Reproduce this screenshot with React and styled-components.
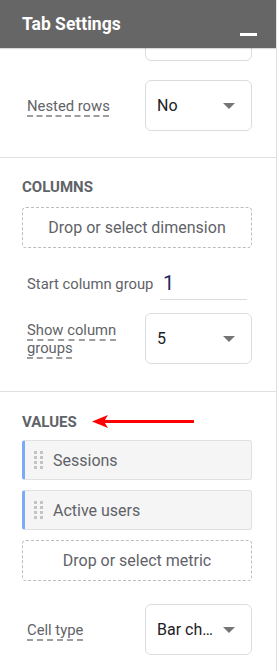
import React from "react";
import styled, { createGlobalStyle } from "styled-components";

const Global = createGlobalStyle`
  html, body { margin: 0; padding: 0; background: #fff; }
  body { font-family: Roboto, "Noto Sans", Arial, sans-serif; }
  * { box-sizing: border-box; }
`;

const Panel = styled.div`
  position: relative;
  width: 277px;
  height: 671px;
  border-right: 1px solid #e0e0e0;
  display: flex;
  flex-direction: column;
  overflow: hidden;
`;

const Header = styled.div`
  height: 48px;
  flex: none;
  background: #666666;
  display: flex;
  align-items: center;
  justify-content: space-between;
  padding: 0 19px 0 22px;
  box-shadow: 0 1px 1px rgba(0, 0, 0, 0.15);
  position: relative;
  z-index: 2;
`;

const Title = styled.div`
  color: #fff;
  font-size: 17.5px;
  font-weight: 700;
  margin-top: -1px;
`;

const Minimize = styled.div`
  width: 17px;
  height: 3px;
  background: #fff;
  margin-top: 20px;
`;

const Body = styled.div`
  flex: 1;
  overflow: hidden;
`;

const Section = styled.div`
  padding: ${(p) => p.$pad || "0 24px 0 22px"};
  border-bottom: ${(p) => (p.$divider ? "1px solid #e0e0e0" : "none")};
  display: flex;
  flex-direction: column;
`;

const Heading = styled.div`
  font-size: 15px;
  font-weight: 700;
  color: #5f6368;
  line-height: 16px;
  margin-bottom: ${(p) => p.$mb || "12px"};
`;

const Row = styled.div`
  display: flex;
  align-items: center;
  justify-content: space-between;
  padding-left: 5px;
  margin-top: ${(p) => p.$mt || "0"};
`;

const Label = styled.span`
  font-size: 14.8px;
  line-height: 18px;
  color: #5f6368;
  max-width: ${(p) => p.$max || "112px"};
  white-space: ${(p) => (p.$nowrap ? "nowrap" : "normal")};
  ${(p) =>
    p.$dashed &&
    `
    text-decoration: underline dashed #9e9e9e;
    text-decoration-thickness: 2px;
    text-underline-offset: 5px;
  `}
`;

const SelectBox = styled.div`
  width: 107px;
  height: 51px;
  border: 1px solid #dadce0;
  border-radius: 6px;
  display: flex;
  align-items: center;
  padding: 0 16px 0 11px;
  gap: 6px;
  background: #fff;
`;

const SelectValue = styled.span`
  flex: 1;
  font-size: 16px;
  color: #202124;
  white-space: nowrap;
  overflow: hidden;
  text-overflow: ellipsis;
`;

const Caret = styled.span`
  flex: none;
  width: 0;
  height: 0;
  border-left: 6px solid transparent;
  border-right: 6px solid transparent;
  border-top: 6px solid #757575;
`;

const DropZone = styled.div`
  height: 41px;
  border: 1px dashed #bdbdbd;
  border-radius: 4px;
  display: flex;
  align-items: center;
  justify-content: center;
  font-size: 16px;
  color: #5f6368;
`;

const InputWrap = styled.div`
  width: 87px;
  margin-right: 5px;
  border-bottom: 1px solid #dadce0;
  height: 33px;
  display: flex;
  align-items: center;
  padding-left: 3px;
  font-size: 20px;
  color: #1f2a5e;
`;

const Chip = styled.div`
  height: 40px;
  background: #f5f5f5;
  border: 1px solid #e0e0e0;
  border-left: 3px solid #7baaf7;
  border-radius: 3px;
  display: flex;
  align-items: center;
  padding-left: 9px;
  gap: 10px;
  font-size: 16px;
  color: #5f6368;
  margin-bottom: ${(p) => p.$mb || "0"};
`;

const Handle = styled.span`
  display: grid;
  grid-template-columns: 3px 3px;
  grid-auto-rows: 3px;
  column-gap: 3px;
  row-gap: 2px;
  & > i {
    display: block;
    background: #c4c4c4;
  }
`;

const Arrow = styled.svg`
  position: absolute;
  left: 90px;
  top: 412px;
`;

const DragHandle = () => (
  <Handle>
    {Array.from({ length: 8 }).map((_, i) => (
      <i key={i} />
    ))}
  </Handle>
);

const Select = ({ value }) => (
  <SelectBox>
    <SelectValue>{value}</SelectValue>
    <Caret />
  </SelectBox>
);

export default function App() {
  return (
    <>
      <Global />
      <Panel>
        <Header>
          <Title>Tab Settings</Title>
          <Minimize />
        </Header>
        <Body>
          <Section $divider $pad="0 24px 26px 22px">
            <Row $mt="-38px">
              <span />
              <SelectBox />
            </Row>
            <Row $mt="19px">
              <Label $dashed>Nested rows</Label>
              <Select value="No" />
            </Row>
          </Section>
          <Section $divider $pad="21px 24px 27px 22px">
            <Heading>COLUMNS</Heading>
            <DropZone>Drop or select dimension</DropZone>
            <Row $mt="19px">
              <Label $nowrap $max="none">Start column group</Label>
              <InputWrap>1</InputWrap>
            </Row>
            <Row $mt="13px">
              <Label $dashed>Show column groups</Label>
              <Select value="5" />
            </Row>
          </Section>
          <Section $pad="22px 24px 0 22px">
            <Heading $mb="10px">VALUES</Heading>
            <Chip $mb="10px">
              <DragHandle />
              Sessions
            </Chip>
            <Chip $mb="10px">
              <DragHandle />
              Active users
            </Chip>
            <DropZone>Drop or select metric</DropZone>
            <Row $mt="23px">
              <Label $dashed>Cell type</Label>
              <Select value="Bar chart" />
            </Row>
          </Section>
        </Body>
        <Arrow width="106" height="18" viewBox="0 0 106 18">
          <line x1="14" y1="9.5" x2="104" y2="9.5" stroke="#ff0000" strokeWidth="3" />
          <path d="M2 9.5 L18 3 L14 9.5 L18 16 Z" fill="#ff0000" />
        </Arrow>
      </Panel>
    </>
  );
}
